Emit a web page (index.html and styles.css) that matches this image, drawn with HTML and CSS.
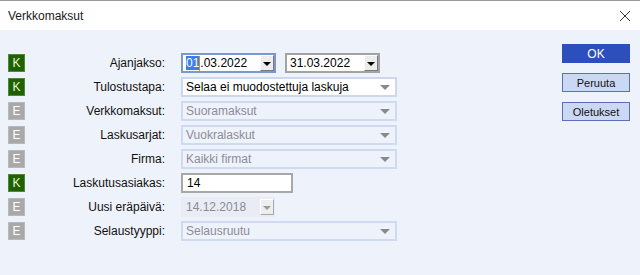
FILE: index.html
```html
<!DOCTYPE html>
<html lang="fi">
<head>
    <meta charset="UTF-8">
    <title>Verkkomaksut</title>
    <link rel="stylesheet" href="styles.css">
</head>
<body>
    <div class="titlebar">
        <span class="title">Verkkomaksut</span>
        <svg class="close" width="12" height="12" viewBox="0 0 12 12"><path d="M1 1L11 11M11 1L1 11" stroke="#333" stroke-width="1" fill="none"/></svg>
    </div>
    <div class="content">
        <div class="form">
            <div class="row">
                <span class="badge on">K</span>
                <label>Ajanjakso:</label>
                <div class="field">
                    <div class="date focus"><span class="val"><span class="sel">01</span><span class="caret"></span>.03.2022</span><span class="dd"></span></div>
                    <div class="date second"><span class="val">31.03.2022</span><span class="dd"></span></div>
                </div>
            </div>
            <div class="row">
                <span class="badge on">K</span>
                <label>Tulostustapa:</label>
                <div class="field">
                    <div class="select">Selaa ei muodostettuja laskuja<span class="arrow"></span></div>
                </div>
            </div>
            <div class="row">
                <span class="badge off">E</span>
                <label>Verkkomaksut:</label>
                <div class="field">
                    <div class="select disabled">Suoramaksut<span class="arrow"></span></div>
                </div>
            </div>
            <div class="row">
                <span class="badge off">E</span>
                <label>Laskusarjat:</label>
                <div class="field">
                    <div class="select disabled">Vuokralaskut<span class="arrow"></span></div>
                </div>
            </div>
            <div class="row">
                <span class="badge off">E</span>
                <label>Firma:</label>
                <div class="field">
                    <div class="select disabled">Kaikki firmat<span class="arrow"></span></div>
                </div>
            </div>
            <div class="row">
                <span class="badge on">K</span>
                <label>Laskutusasiakas:</label>
                <div class="field">
                    <div class="text">14</div>
                </div>
            </div>
            <div class="row">
                <span class="badge off">E</span>
                <label>Uusi eräpäivä:</label>
                <div class="field">
                    <div class="date disabled"><span class="val">14.12.2018</span><span class="dd"></span></div>
                </div>
            </div>
            <div class="row">
                <span class="badge off">E</span>
                <label>Selaustyyppi:</label>
                <div class="field">
                    <div class="select disabled">Selausruutu<span class="arrow"></span></div>
                </div>
            </div>
        </div>
        <div class="buttons">
            <button class="btn primary">OK</button>
            <button class="btn">Peruuta</button>
            <button class="btn">Oletukset</button>
        </div>
    </div>
</body>
</html>
```

FILE: styles.css
```css
html, body {
    margin: 0;
    height: 100%;
}
body {
    font-family: 'Liberation Sans', Arial, sans-serif;
    font-size: 12px;
    color: #000;
    background: #eef2fa;
}
.titlebar {
    height: 30px;
    background: #fff;
    border-top: 1px solid #9a9a9a;
    box-sizing: border-box;
    display: flex;
    align-items: center;
    justify-content: space-between;
    padding: 0 9px 0 8px;
}
.title {
    font-size: 12px;
    color: #1a1a1a;
}
.content {
    display: flex;
    justify-content: space-between;
    align-items: flex-start;
}
.form {
    display: flex;
    flex-direction: column;
    gap: 4px;
    padding: 23px 0 0 8px;
}
.row {
    display: grid;
    grid-template-columns: 17px 140px auto;
    align-items: center;
    height: 20px;
}
.badge {
    width: 17px;
    height: 18px;
    display: flex;
    align-items: center;
    justify-content: center;
    color: #fff;
    font-size: 12px;
    box-sizing: border-box;
}
.badge.on {
    background: #1f6100;
    border: 1px solid #4f8a32;
    color: #e8f4d8;
}
.badge.off {
    background: #a9a9a9;
    border: 1px solid #b9b9b9;
}
label {
    text-align: right;
    color: #111;
}
.field {
    margin-left: 16px;
    display: flex;
    gap: 9px;
}
.date {
    width: 95px;
    height: 20px;
    box-sizing: border-box;
    background: #fff;
    border: 1px solid #9f9f9f;
    display: flex;
    align-items: center;
    justify-content: space-between;
    padding: 0 1px 0 4px;
}
.date.focus {
    border: 2px solid #7d96cf;
    padding-left: 3px;
    padding-right: 0;
}
.date.second {
    border: 2px solid #a3a3a3;
    padding-left: 3px;
    padding-right: 0;
}
.date.disabled {
    width: 94px;
    background: #e9ecf4;
    border: none;
    color: #8b8b93;
    padding-left: 5px;
}
.val {
    display: flex;
    align-items: center;
    font-size: 12px;
}
.sel {
    background: #3a7ee8;
    color: #fff;
}
.caret {
    width: 1px;
    height: 15px;
    background: #e08a20;
}
.dd {
    width: 14px;
    height: 16px;
    box-sizing: border-box;
    background: #ececec;
    border: 1px solid;
    border-color: #fdfdfd #7a7a7a #7a7a7a #fdfdfd;
    display: flex;
    align-items: center;
    justify-content: center;
}
.dd::after {
    content: '';
    border-left: 4px solid transparent;
    border-right: 4px solid transparent;
    border-top: 4px solid #000;
    margin-top: 2px;
}
.date.disabled .dd {
    border-color: #fff #a8a8a8 #a8a8a8 #fff;
    background: #eeeeee;
}
.date.disabled .dd::after {
    border-top-color: #9a9a9a;
}
.select {
    width: 216px;
    height: 20px;
    box-sizing: border-box;
    background: #fff;
    border: 2px solid #cdd7ee;
    display: flex;
    align-items: center;
    justify-content: space-between;
    padding: 0 4px 0 3px;
    font-size: 12px;
}
.select.disabled {
    background: #eef2fa;
    color: #8c8c99;
    border-color: #cfd9f0;
}
.arrow {
    border-left: 5px solid transparent;
    border-right: 5px solid transparent;
    border-top: 5px solid #8a8a8a;
    margin-right: 1px;
}
.text {
    width: 112px;
    height: 20px;
    box-sizing: border-box;
    background: #fff;
    border: 2px solid #a8a8a8;
    padding-left: 4px;
    display: flex;
    align-items: center;
    font-size: 12px;
}
.buttons {
    display: flex;
    flex-direction: column;
    gap: 10px;
    padding: 14px 10px 0 0;
}
.btn {
    width: 68px;
    height: 19px;
    font-family: 'Liberation Sans', Arial, sans-serif;
    font-size: 11px;
    color: #111;
    background: #cbd8f3;
    border: 1px solid #5a70b8;
    padding: 0;
}
.btn.primary {
    background: #2d4fbd;
    border-color: #2d4fbd;
    color: #fff;
    font-size: 12px;
}
```
